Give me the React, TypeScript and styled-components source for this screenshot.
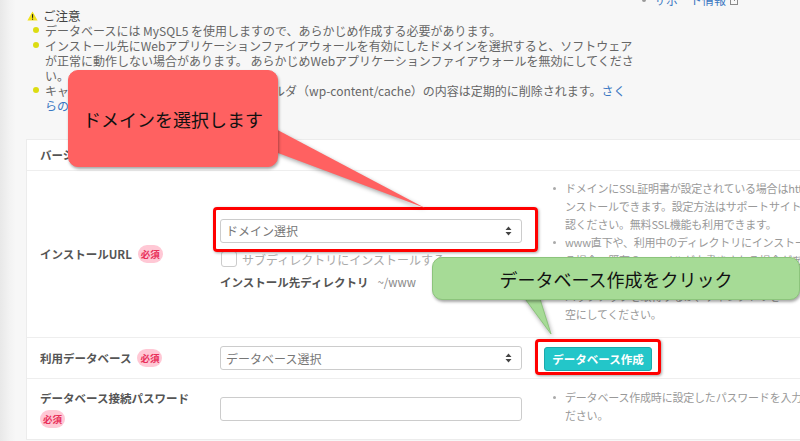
import styled, { createGlobalStyle } from "styled-components";

const GlobalStyle = createGlobalStyle`
  html, body {
    margin: 0;
    padding: 0;
    background: #f7f7f7;
    overflow: hidden;
  }
  body {
    font-family: "Noto Sans CJK JP", "Noto Sans", sans-serif;
    color: #555;
  }
  * {
    box-sizing: border-box;
  }
`;

const Page = styled.div`
  position: relative;
  width: 800px;
  height: 441px;
  overflow: hidden;
  display: flex;
  background: #f7f7f7;
`;

const Shade = styled.div`
  width: 26px;
  flex: none;
  background: linear-gradient(to right, #e8e8e8, #f3f3f3 10px, #f7f7f7 16px);
`;

const Main = styled.div`
  flex: 1;
  min-width: 0;
  display: flex;
  flex-direction: column;
`;

const TopLinks = styled.div`
  height: 8px;
  display: flex;
  justify-content: flex-end;
  padding-right: 60px;
`;

const SupportLink = styled.span`
  display: flex;
  align-items: center;
  gap: 4px;
  margin-top: -7px;
  height: 14px;
  font-size: 12px;
  line-height: 14px;
  color: #3b78c2;
  &::before {
    content: "";
    width: 4px;
    height: 4px;
    border-radius: 50%;
    background: #999;
    margin-right: 4px;
  }
`;

const NoticeTitle = styled.div`
  display: flex;
  align-items: center;
  gap: 5px;
  height: 15px;
  margin-left: 1px;
  font-size: 12.5px;
  color: #444;
`;

const NoticeList = styled.ul`
  list-style: none;
  margin: 0;
  padding: 0;
  font-size: 12px;
  line-height: 15px;
  color: #666;
  white-space: nowrap;
`;

const NoticeItem = styled.li`
  position: relative;
  padding-left: 19px;
  &::before {
    content: "";
    position: absolute;
    left: 7px;
    top: 4px;
    width: 6px;
    height: 6px;
    border-radius: 50%;
    background: #dcdc12;
  }
`;

const TextLink = styled.span`
  color: #3b78c2;
`;

const Panel = styled.div`
  margin-top: 26px;
  width: 900px;
  flex: none;
  background: #fff;
  border: 1px solid #ececec;
`;

const Row = styled.div<{ $pad: number }>`
  display: grid;
  grid-template-columns: 193px 324px 1fr;
  align-items: center;
  padding: ${(p) => p.$pad}px 0;
  & + & {
    border-top: 1px solid #eee;
  }
`;

const LabelCell = styled.div<{ $stack?: boolean }>`
  display: flex;
  flex-direction: ${(p) => (p.$stack ? "column" : "row")};
  align-items: ${(p) => (p.$stack ? "flex-start" : "center")};
  gap: ${(p) => (p.$stack ? 4 : 6)}px;
  padding-left: 13px;
`;

const Label = styled.span`
  font-size: 11.5px;
  line-height: 16px;
  font-weight: 700;
  color: #555;
  white-space: nowrap;
`;

const Required = styled.span`
  display: inline-flex;
  align-items: center;
  justify-content: center;
  width: 25px;
  height: 18px;
  border-radius: 9px;
  background: #ffc8d5;
  color: #e8305a;
  font-size: 9.5px;
  font-weight: 700;
`;

const FieldCell = styled.div`
  display: flex;
  flex-direction: column;
`;

const Select = styled.div`
  width: 302px;
  height: 24px;
  display: flex;
  align-items: center;
  justify-content: space-between;
  padding: 0 9px 0 5px;
  border: 1px solid #ccc;
  border-radius: 3px;
  background: #fff;
  font-size: 12px;
  color: #777;
`;

const TextInput = styled.div`
  width: 302px;
  height: 24px;
  border: 1px solid #ccc;
  border-radius: 3px;
  background: #fff;
`;

const CheckRow = styled.div`
  display: flex;
  align-items: center;
  gap: 5px;
  margin-top: 8px;
  padding-left: 1px;
  font-size: 12px;
  color: #aaa;
`;

const Checkbox = styled.span`
  width: 16px;
  height: 16px;
  border: 1px solid #ccc;
  border-radius: 3px;
  background: #fff;
`;

const DirLine = styled.div`
  display: flex;
  align-items: center;
  gap: 9px;
  margin-top: 6px;
  line-height: 16px;
`;

const DirValue = styled.span`
  font-size: 11.5px;
  color: #888;
`;

const HelpList = styled.ul`
  list-style: none;
  margin: -3px 0 3px;
  padding: 0;
  font-size: 11px;
  line-height: 18px;
  letter-spacing: -0.2px;
  color: #999;
  white-space: nowrap;
`;

const HelpItem = styled.li`
  position: relative;
  padding-left: 21px;
  &::before {
    content: "";
    position: absolute;
    left: 9px;
    top: 8px;
    width: 3px;
    height: 3px;
    border-radius: 50%;
    background: #aaa;
  }
`;

const CreateButton = styled.button`
  width: 108px;
  height: 24px;
  padding: 0;
  border: 1px solid #1aa9ac;
  border-radius: 3px;
  background: #23c6c9;
  color: #fff;
  font-family: inherit;
  font-size: 11.5px;
  font-weight: 700;
`;

const Highlight = styled.div<{ $x: number; $y: number; $w: number; $h: number }>`
  position: absolute;
  left: ${(p) => p.$x}px;
  top: ${(p) => p.$y}px;
  width: ${(p) => p.$w}px;
  height: ${(p) => p.$h}px;
  border: 3px solid #ff0000;
  border-radius: 4px;
  box-shadow: 1px 1px 3px rgba(0, 0, 0, 0.35);
`;

const Tails = styled.svg`
  position: absolute;
  left: 0;
  top: 0;
  filter: drop-shadow(1px 2px 2px rgba(0, 0, 0, 0.35));
`;

const Callout = styled.div<{ $x: number; $y: number; $w: number; $h: number; $bg: string; $border: string }>`
  position: absolute;
  left: ${(p) => p.$x}px;
  top: ${(p) => p.$y}px;
  width: ${(p) => p.$w}px;
  height: ${(p) => p.$h}px;
  display: flex;
  align-items: center;
  justify-content: center;
  background: ${(p) => p.$bg};
  border: 1px solid ${(p) => p.$border};
  border-radius: 10px;
  box-shadow: 1px 2px 3px rgba(0, 0, 0, 0.35);
  font-size: 18px;
  color: #111;
  white-space: nowrap;
`;

const WarningIcon = () => (
  <svg width="11" height="10" viewBox="0 0 11 10">
    <path d="M5.5 0.5 L10.6 9.5 L0.4 9.5 Z" fill="#f2e21a" />
    <rect x="5" y="3.2" width="1.1" height="3.6" fill="#222" />
    <rect x="5" y="7.6" width="1.1" height="1.1" fill="#222" />
  </svg>
);

const ExternalIcon = () => (
  <svg width="10" height="10" viewBox="0 0 10 10" fill="none" stroke="#8a8a8a" strokeWidth="1">
    <rect x="0.5" y="2.5" width="7" height="7" />
    <path d="M4 6 L9.5 0.5 M6.5 0.5 H9.5 V3.5" />
  </svg>
);

const SelectArrows = () => (
  <svg width="7" height="10" viewBox="0 0 7 10">
    <path d="M3.5 0.5 L6.5 4 H0.5 Z M3.5 9.5 L6.5 6 H0.5 Z" fill="#444" />
  </svg>
);

export default function App() {
  return (
    <>
      <GlobalStyle />
      <Page>
        <Shade />
        <Main>
          <TopLinks>
            <SupportLink>
              サポート情報
              <ExternalIcon />
            </SupportLink>
          </TopLinks>
          <NoticeTitle>
            <WarningIcon />
            ご注意
          </NoticeTitle>
          <NoticeList>
            <NoticeItem>データベースには MySQL5 を使用しますので、あらかじめ作成する必要があります。</NoticeItem>
            <NoticeItem>
              インストール先にWebアプリケーションファイアウォールを有効にしたドメインを選択すると、ソフトウェア
              <br />
              が正常に動作しない場合があります。 あらかじめWebアプリケーションファイアウォールを無効にしてくださ
              <br />
              い。 <TextLink>くわしくはサポート情報</TextLink> <ExternalIcon />
            </NoticeItem>
            <NoticeItem>
              キャッシュ系プラグインのキャッシュフォルダ（wp-content/cache）の内容は定期的に削除されます。
              <TextLink>さく</TextLink>
              <br />
              <TextLink>らのサポート情報</TextLink>
            </NoticeItem>
          </NoticeList>

          <Panel>
            <Row $pad={7}>
              <LabelCell>
                <Label>バージョン</Label>
              </LabelCell>
              <div style={{ height: 15 }} />
            </Row>
            <Row $pad={11}>
              <LabelCell>
                <Label>インストールURL</Label>
                <Required>必須</Required>
              </LabelCell>
              <FieldCell>
                <Select>
                  ドメイン選択
                  <SelectArrows />
                </Select>
                <CheckRow>
                  <Checkbox />
                  サブディレクトリにインストールする
                </CheckRow>
                <DirLine>
                  <Label>インストール先ディレクトリ</Label>
                  <DirValue>~/www</DirValue>
                </DirLine>
              </FieldCell>
              <HelpList>
                <HelpItem>
                  ドメインにSSL証明書が設定されている場合はhttpsでイ
                  <br />
                  ンストールできます。設定方法はサポートサイトをご確
                  <br />
                  認ください。無料SSL機能も利用できます。
                </HelpItem>
                <HelpItem>
                  www直下や、利用中のディレクトリにインストールす
                  <br />
                  る場合、既存のファイルが上書きされる場合があり
                  <br />
                  ます。インストール先のディレクトリは事前に
                  <br />
                  バックアップを取得するか、ディレクトリを
                  <br />
                  空にしてください。
                </HelpItem>
              </HelpList>
            </Row>
            <Row $pad={7}>
              <LabelCell>
                <Label>利用データベース</Label>
                <Required>必須</Required>
              </LabelCell>
              <FieldCell>
                <Select>
                  データベース選択
                  <SelectArrows />
                </Select>
              </FieldCell>
              <div>
                <CreateButton>データベース作成</CreateButton>
              </div>
            </Row>
            <Row $pad={11}>
              <LabelCell $stack>
                <Label>データベース接続パスワード</Label>
                <Required>必須</Required>
              </LabelCell>
              <FieldCell>
                <TextInput />
              </FieldCell>
              <HelpList>
                <HelpItem>
                  データベース作成時に設定したパスワードを入力してく
                  <br />
                  ださい。
                </HelpItem>
              </HelpList>
            </Row>
          </Panel>
        </Main>

        <Highlight $x={213} $y={207} $w={325} $h={45} />
        <Highlight $x={535} $y={339} $w={126} $h={36} />

        <Tails width="800" height="441" viewBox="0 0 800 441">
          <polygon points="270,126 270,150 425,208" fill="#ff6161" />
          <polygon points="523,296 539,296 551,334" fill="#a6db96" stroke="#8cc47c" strokeWidth="1" />
        </Tails>
        <Callout $x={68} $y={70} $w={210} $h={97} $bg="#ff6161" $border="#ff6161">
          ドメインを選択します
        </Callout>
        <Callout $x={432} $y={257} $w={368} $h={43} $bg="#a6db96" $border="#8cc47c">
          データベース作成をクリック
        </Callout>
      </Page>
    </>
  );
}
